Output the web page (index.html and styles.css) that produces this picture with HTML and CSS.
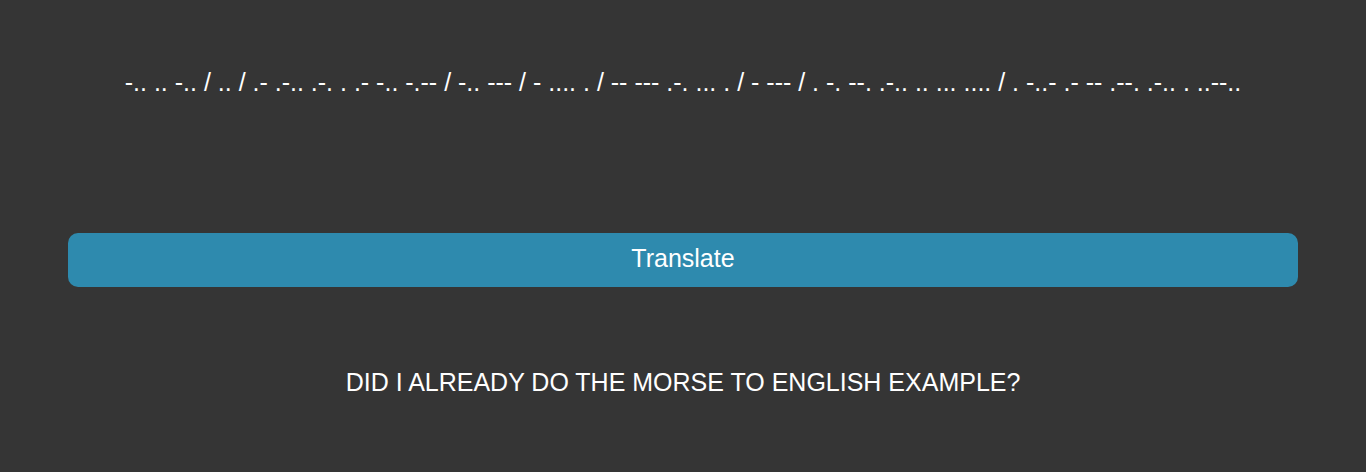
FILE: index.html
```html
<!DOCTYPE html>
<html>
<head>
<meta charset="utf-8">
<link rel="stylesheet" href="styles.css">
</head>
<body>
<main class="app">
  <div class="input">-.. .. -.. / .. / .- .-.. .-. . .- -.. -.-- / -.. --- / - .... . / -- --- .-. ... . / - --- / . -. --. .-.. .. ... .... / . -..- .- -- .--. .-.. . ..--..</div>
  <button class="translate">Translate</button>
  <div class="output">DID I ALREADY DO THE MORSE TO ENGLISH EXAMPLE?</div>
</main>
</body>
</html>
```
FILE: styles.css
```css
html, body {
  margin: 0;
  padding: 0;
  background: #353535;
  height: 100%;
}
.app {
  font-family: "Liberation Sans", Arial, sans-serif;
  color: #ffffff;
  display: flex;
  flex-direction: column;
  align-items: center;
  padding-top: 68px;
}
.input {
  font-size: 25px;
  line-height: 28px;
  text-align: center;
  height: 28px;
  margin-bottom: 137px;
}
.translate {
  width: 1230px;
  height: 54px;
  border: none;
  border-radius: 10px;
  background: #2e8aae;
  color: #ffffff;
  font-family: "Liberation Sans", Arial, sans-serif;
  font-size: 25px;
  padding: 0 0 3px 0;
}
.output {
  margin-top: 81px;
  font-size: 25px;
  line-height: 28px;
  text-align: center;
}
```
